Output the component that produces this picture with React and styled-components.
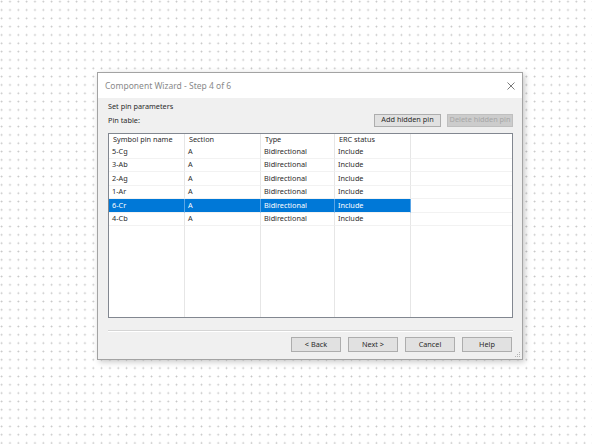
import React from 'react'
import styled, { createGlobalStyle } from 'styled-components'

const GlobalStyle = createGlobalStyle`
  html, body {
    margin: 0;
    padding: 0;
    background: #fff;
  }
  * {
    box-sizing: border-box;
  }
`

const Page = styled.div`
  width: 592px;
  height: 444px;
  padding: 72px 0 0 97px;
  overflow: hidden;
  background-color: #fff;
  background-image: radial-gradient(circle, #c2c2c2 0.6px, rgba(255,255,255,0) 1.2px);
  background-size: 8.333px 8.333px;
  background-position: -2.5px -2.5px;
  font-family: "Noto Sans", "DejaVu Sans", sans-serif;
`

const Dialog = styled.div`
  position: relative;
  width: 426px;
  height: 288px;
  display: flex;
  flex-direction: column;
  border: 1px solid #a3a3a3;
  box-shadow: 2px 2px 6px rgba(0, 0, 0, 0.22);
  background: #f0f0f0;
`

const TitleBar = styled.div`
  height: 25px;
  flex: none;
  display: flex;
  align-items: center;
  justify-content: space-between;
  padding: 0 7px 0 7px;
  background: #fff;
`

const Title = styled.span`
  font-size: 8.5px;
  color: #8a8a8a;
  line-height: 1;
  margin-top: 1px;
`

const Body = styled.div`
  flex: 1;
  display: flex;
  flex-direction: column;
  padding: 2px 9px 7px 10px;
  font-size: 7.3px;
  color: #2b2b2b;
`

const Heading = styled.div`
  height: 12px;
  line-height: 12px;
`

const Toolbar = styled.div`
  height: 14px;
  margin-top: 1px;
  display: flex;
  align-items: center;
  gap: 6px;
`

const Label = styled.span`
  flex: 1;
  line-height: 14px;
`

const Button = styled.button`
  width: ${p => p.$width || 50}px;
  height: ${p => p.$height || 15}px;
  padding: 0;
  font-family: inherit;
  font-size: 7.3px;
  line-height: 1;
  white-space: nowrap;
  color: ${p => (p.disabled ? '#a6a6a6' : '#2b2b2b')};
  background: ${p => (p.disabled ? '#cccccc' : '#e1e1e1')};
  border: 1px solid ${p => (p.disabled ? '#bfbfbf' : '#adadad')};
  border-radius: 0;
`

const Table = styled.div`
  margin-top: 6px;
  height: 185px;
  display: grid;
  grid-template-columns: 76px 76px 74px 76px 1fr;
  grid-template-rows: 11px repeat(6, 13.5px) 1fr;
  border: 1px solid #828790;
  background: #fff;
  overflow: hidden;
`

const Cell = styled.div`
  padding-left: ${p => (p.$header ? 4 : 3)}px;
  white-space: nowrap;
  overflow: hidden;
  display: flex;
  align-items: center;
  line-height: 1;
  border-right: ${p => (p.$last ? 'none' : `1px solid ${p.$selected ? '#5aa5e6' : '#e6e6e6'}`)};
  border-bottom: ${p => (p.$row ? '1px solid #f2f2f2' : 'none')};
  background: ${p => (p.$selected ? '#0078d7' : 'transparent')};
  color: ${p => (p.$selected ? '#fff' : '#2b2b2b')};
`

const Separator = styled.div`
  margin-top: 12px;
  height: 2px;
  border-top: 1px solid #d5d5d5;
  border-bottom: 1px solid #fff;
`

const Footer = styled.div`
  margin-top: 5px;
  display: flex;
  justify-content: flex-end;
  gap: 7px;
  padding-right: 1px;
`

const Grip = styled.svg`
  position: absolute;
  right: 1px;
  bottom: 1px;
`

const columns = ['Symbol pin name', 'Section', 'Type', 'ERC status']

const pins = [
  { name: '5-Cg', section: 'A', type: 'Bidirectional', erc: 'Include' },
  { name: '3-Ab', section: 'A', type: 'Bidirectional', erc: 'Include' },
  { name: '2-Ag', section: 'A', type: 'Bidirectional', erc: 'Include' },
  { name: '1-Ar', section: 'A', type: 'Bidirectional', erc: 'Include' },
  { name: '6-Cr', section: 'A', type: 'Bidirectional', erc: 'Include', selected: true },
  { name: '4-Cb', section: 'A', type: 'Bidirectional', erc: 'Include' },
]

const CloseIcon = () => (
  <svg width="8" height="8" viewBox="0 0 8 8">
    <path d="M0.5 0.5 L7.5 7.5 M7.5 0.5 L0.5 7.5" stroke="#6b6b6b" strokeWidth="0.9" fill="none" />
  </svg>
)

export default function App () {
  return (
    <>
      <GlobalStyle />
      <Page>
        <Dialog>
          <TitleBar>
            <Title>Component Wizard - Step 4 of 6</Title>
            <CloseIcon />
          </TitleBar>
          <Body>
            <Heading>Set pin parameters</Heading>
            <Toolbar>
              <Label>Pin table:</Label>
              <Button $width={67} $height={13}>Add hidden pin</Button>
              <Button $width={66} $height={13} disabled>Delete hidden pin</Button>
            </Toolbar>
            <Table>
              {columns.map(c => <Cell key={c} $header>{c}</Cell>)}
              <Cell $header $last />
              {pins.map(p => (
                <React.Fragment key={p.name}>
                  <Cell $row $selected={p.selected}>{p.name}</Cell>
                  <Cell $row $selected={p.selected}>{p.section}</Cell>
                  <Cell $row $selected={p.selected}>{p.type}</Cell>
                  <Cell $row $selected={p.selected}>{p.erc}</Cell>
                  <Cell $row $last />
                </React.Fragment>
              ))}
              <Cell />
              <Cell />
              <Cell />
              <Cell />
              <Cell $last />
            </Table>
            <Separator />
            <Footer>
              <Button>&lt; Back</Button>
              <Button>Next &gt;</Button>
              <Button>Cancel</Button>
              <Button>Help</Button>
            </Footer>
          </Body>
          <Grip width="7" height="7" viewBox="0 0 7 7">
            <rect x="5" y="1" width="1" height="1" fill="#b5b5b5" />
            <rect x="3" y="3" width="1" height="1" fill="#b5b5b5" />
            <rect x="5" y="3" width="1" height="1" fill="#b5b5b5" />
            <rect x="1" y="5" width="1" height="1" fill="#b5b5b5" />
            <rect x="3" y="5" width="1" height="1" fill="#b5b5b5" />
            <rect x="5" y="5" width="1" height="1" fill="#b5b5b5" />
          </Grip>
        </Dialog>
      </Page>
    </>
  )
}
